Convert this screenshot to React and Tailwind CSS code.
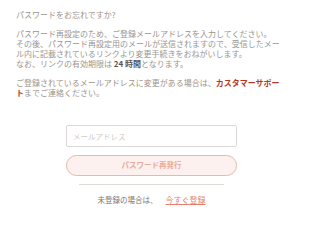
const App = () => {
  return (
    <div className="w-[300px] h-[215px] bg-white pt-[10px] pl-4 pr-[13px] text-[8px] leading-[9.7px] text-[#9a9590]" style={{ fontFamily: '"Noto Sans CJK JP", "Noto Sans", sans-serif' }}>
      <p>パスワードをお忘れですか?</p>
      <p className="mt-[9.7px]">
        パスワード再設定のため、ご登録メールアドレスを入力してください。
        <br />
        その後、パスワード再設定用のメールが送信されますので、受信したメール内に記載されているリンクより変更手続きをおねがいします。
        <br />
        なお、リンクの有効期限は <span className="font-bold text-[#5a5550]">24 時間</span>となります。
      </p>
      <p className="mt-[9.7px]">
        ご登録されているメールアドレスに変更がある場合は、<a className="font-bold text-[#b23a2c]">カスタマーサポート</a>までご連絡ください。
      </p>

      <div className="mt-[28px] w-[171px] ml-[50px] flex flex-col items-center">
        <input
          type="text"
          placeholder="メールアドレス"
          className="w-full h-[22px] border border-[#dcd8d6] rounded-[2px] px-[6px] text-[7.5px] placeholder:text-[#cfcbc8] outline-none"
        />
        <button className="mt-[7.5px] w-full h-[21px] rounded-full border border-[#f0b4a8] bg-[#fdf1ef] text-[7.5px] font-bold text-[#eaa99c]">
          パスワード再発行
        </button>
        <div className="mt-[8px] w-[145px] h-[1.5px] bg-[#e0ddd8]" />
        <p className="mt-[10px] text-[7.5px] text-[#7a7570]">
          未登録の場合は、<a className="ml-[8px] text-[8px] text-[#e9806e] underline">今すぐ登録</a>
        </p>
      </div>
    </div>
  );
};

export default App;
